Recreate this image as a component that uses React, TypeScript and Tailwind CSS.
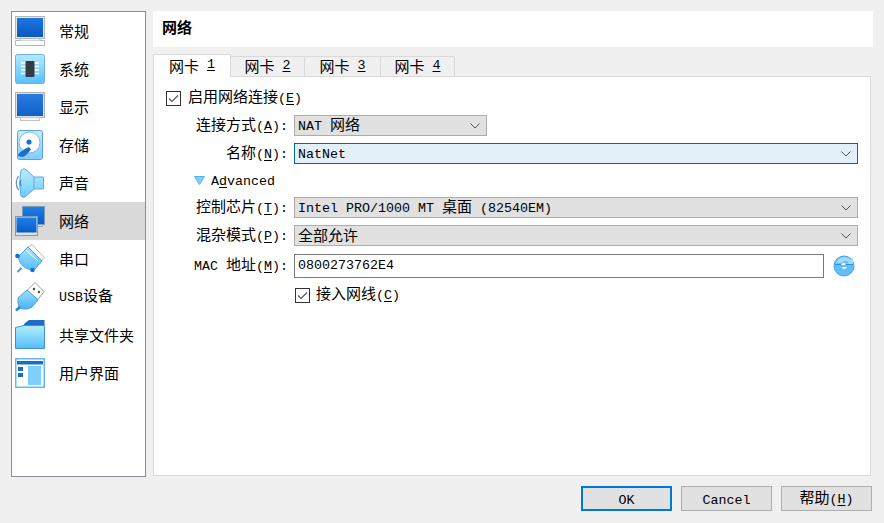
import React from "react";

const L = ({ children, u }: { children: React.ReactNode; u?: boolean }) => (
  <span className={`font-['Liberation_Mono'] text-[13.33px] whitespace-pre ${u ? "underline underline-offset-2" : ""}`}>{children}</span>
);

const Hot = ({ c }: { c: string }) => (
  <>
    <L>(</L>
    <L u>{c}</L>
    <L>)</L>
  </>
);

const Chevron = () => (
  <svg width="10" height="6" viewBox="0 0 10 6" fill="none" className="shrink-0">
    <path d="M0.500 0.500L5 5l4.500-4.500" stroke="#555" strokeWidth="1" />
  </svg>
);

const Check = () => (
  <svg width="15" height="15" viewBox="0 0 15 15" fill="none" className="shrink-0">
    <rect x="0.500" y="0.500" width="14" height="14" fill="#fff" stroke="#333" />
    <path d="M3 7.500l3 3L12 4.500" stroke="#555" strokeWidth="1.100" />
  </svg>
);

const Combo = ({ children, className, active }: { children: React.ReactNode; className?: string; active?: boolean }) => (
  <div
    className={`h-[21px] flex items-center justify-between pl-[3px] pr-[6px] border ${
      active ? "border-[#0067c0] bg-[#e3f0fa]" : "border-[#adadad] bg-[#e1e1e1]"
    } ${className ?? ""}`}
  >
    <span className="whitespace-pre leading-none pb-[2px]">{children}</span>
    <Chevron />
  </div>
);

const Row = ({ label, children, className }: { label: React.ReactNode; children: React.ReactNode; className?: string }) => (
  <div className={`flex items-center ${className ?? ""}`}>
    <div className="w-[140px] text-right whitespace-pre pr-[6px] pb-[2px] leading-none shrink-0">{label}</div>
    {children}
  </div>
);

const grad = (id: string, a: string, b: string) => (
  <linearGradient id={id} x1="0" y1="0" x2="0" y2="1">
    <stop offset="0" stopColor={a} />
    <stop offset="1" stopColor={b} />
  </linearGradient>
);

const icons: Record<string, React.ReactNode> = {
  general: (
    <>
      <defs>{grad("g1", "#1a78e0", "#0a58c0")}</defs>
      <rect x="0.500" y="0.500" width="29" height="22" fill="#e8e8e8" stroke="#b5b5b5" />
      <rect x="2" y="2" width="26" height="19" fill="url(#g1)" />
      <path d="M0.500 24.500h29v5H0.500z" fill="#fff" stroke="#b5b5b5" />
      <path d="M5 24.500v-2h20v2" fill="#f4f4f4" stroke="#b5b5b5" />
    </>
  ),
  system: (
    <>
      <defs>{grad("g2", "#b4ecff", "#55c0fb")}</defs>
      <rect x="0.500" y="0.500" width="29" height="29" rx="2" fill="url(#g2)" stroke="#6fb0e8" />
      <path d="M6 9h18M6 12.500h18M6 16h18M6 19.500h18" stroke="#fff" strokeWidth="1.400" />
      <rect x="10.500" y="7" width="9" height="16" rx="1" fill="#333b47" />
    </>
  ),
  display: (
    <>
      <defs>{grad("g3", "#2a7ce0", "#1060c8")}</defs>
      <rect x="0.500" y="0.500" width="29" height="25" fill="#e0e0e0" stroke="#b0b0b0" />
      <rect x="2" y="2" width="26" height="22" fill="url(#g3)" />
      <rect x="5.500" y="25.500" width="19" height="3" fill="#f7f7f7" stroke="#c4c4c4" />
    </>
  ),
  storage: (
    <>
      <defs>{grad("g4", "#c5eeff", "#7dcdfb")}</defs>
      <rect x="2.500" y="0.500" width="25" height="29" rx="2" fill="url(#g4)" stroke="#5a9fe0" />
      <circle cx="14.500" cy="12.500" r="10.500" fill="#fff" stroke="#7dbcec" />
      <circle cx="14" cy="12" r="2.600" fill="#1b6fd0" />
      <path d="M3 26c0-3 6-7 11-9l2 2.500c-2.500 3-5 6.500-8 7.500z" fill="#1b6fd0" />
    </>
  ),
  audio: (
    <>
      <defs>{grad("g5", "#bdeeff", "#6ccbfb")}</defs>
      <path d="M6 2.500Q8 0 10 1l9 8h9.500v12H19l-9 8q-2 1-4-1Q3 15 6 2.500z" fill="url(#g5)" stroke="#5fa5e6" />
      <path d="M19 9v12" stroke="#5fa5e6" strokeWidth="1" />
      <path d="M3.500 8Q-1 15 3.500 22" fill="none" stroke="#4a93d8" strokeWidth="1.200" />
      <path d="M6 12q-1.500 3 0 6" fill="none" stroke="#2c7fd8" strokeWidth="1" />
    </>
  ),
  network: (
    <>
      <defs>{grad("g6", "#1f80e8", "#0a5ac4")}</defs>
      <rect x="7.500" y="0.500" width="22" height="18" fill="url(#g6)" stroke="#7f9ab5" />
      <rect x="23" y="18.500" width="4" height="2" fill="#eee" stroke="#7f9ab5" />
      <rect x="0.500" y="10.500" width="22" height="19" fill="#dbe4ee" stroke="#7f9ab5" />
      <rect x="1.500" y="11.500" width="20" height="15" fill="url(#g6)" />
    </>
  ),
  serial: (
    <>
      <defs>{grad("g7", "#a5e6ff", "#58bef9")}</defs>
      <path d="M17 0.500L29.500 14l-3 3L13 3z" fill="#fff" stroke="#b8b8b8" />
      <path d="M13 3l14 14-7 8c-4 1-9 0-12-3-3-3-5-7-4-10z" fill="url(#g7)" stroke="#4c9ce6" />
      <path d="M11 6l12 11" stroke="#fff" strokeWidth="1" />
      <circle cx="2.500" cy="12" r="2.300" fill="#1b6fd0" />
      <circle cx="17.500" cy="26" r="2.300" fill="#1b6fd0" />
      <path d="M6.500 24l-4 4" stroke="#4c9ce6" strokeWidth="2" />
    </>
  ),
  usb: (
    <>
      <defs>{grad("g8", "#9fe2ff", "#49b2f6")}</defs>
      <path d="M20 0.500l9 9-6 8-11-9z" fill="#fff" stroke="#9a9a9a" />
      <rect x="18" y="6" width="2" height="2" fill="#333" transform="rotate(45 19 7)" />
      <rect x="23" y="9" width="2" height="2" fill="#333" transform="rotate(45 24 10)" />
      <path d="M12 8l11 10-6 7c-3 2-8 3-12 1-2-1-2-5-2-10z" fill="url(#g8)" stroke="#4c9ce6" />
      <path d="M5 25l-4 3.500" stroke="#2c7fd8" strokeWidth="2.500" />
    </>
  ),
  folder: (
    <>
      <defs>{grad("g9", "#b2edff", "#57bdf8")}</defs>
      <path d="M10 3l4-3h15.500v6H8z" fill="#1b6cc8" />
      <path d="M0.500 7.500L9 5.500h20.500v23H.5z" fill="url(#g9)" stroke="#3f8fdc" />
    </>
  ),
  ui: (
    <>
      <rect x="0.750" y="0.750" width="28.500" height="28.500" fill="#fff" stroke="#62b8f2" strokeWidth="1.500" />
      <rect x="2" y="3" width="26" height="3.500" fill="#1b6cc8" />
      <rect x="3" y="9" width="5" height="4" fill="#1b6cc8" />
      <rect x="3" y="15" width="5" height="4" fill="#1b6cc8" />
      <rect x="13" y="8" width="13" height="19" fill="#7dd0fb" />
    </>
  ),
};

const Icon = ({ name }: { name: string }) => (
  <svg width="30" height="30" viewBox="0 0 30 30" className="shrink-0">
    {icons[name]}
  </svg>
);

const nav: [string, React.ReactNode, boolean?][] = [
  ["general", "常规"],
  ["system", "系统"],
  ["display", "显示"],
  ["storage", "存储"],
  ["audio", "声音"],
  ["network", "网络", true],
  ["serial", "串口"],
  ["usb", <><L>USB</L>设备</>],
  ["folder", "共享文件夹"],
  ["ui", "用户界面"],
];

const tabs: [string, string][] = [
  ["1", "w-[78px] h-[23px] bg-white border-b-0"],
  ["2", "w-[74px] h-[21px] bg-[#f0f0f0] border-l-0"],
  ["3", "w-[76px] h-[21px] bg-[#f0f0f0] border-l-0"],
  ["4", "w-[74px] h-[21px] bg-[#f0f0f0] border-l-0"],
];

export default function App() {
  return (
    <div className="w-[884px] h-[523px] bg-[#f0f0f0] text-[15px] text-black font-['Noto_Sans_CJK_SC',sans-serif] flex flex-col px-[11px] pt-[11px] overflow-hidden">
      <div className="flex h-[466px] shrink-0">
        <aside className="w-[135px] shrink-0 bg-white border border-[#8b9097] mr-[7px]">
          {nav.map(([n, t, sel], i) => (
            <div key={i} className={`h-[38px] flex items-center pl-[3px] ${sel ? "bg-[#d9d9d9]" : ""}`}>
              <Icon name={n} />
              <span className="ml-[14px] pb-[2px] leading-none whitespace-pre">{t}</span>
            </div>
          ))}
        </aside>
        <main className="flex-1 flex flex-col min-w-0">
          <div className="h-[36px] bg-white shrink-0 flex items-center pl-[9px] pb-[3px] font-bold text-[15px]">网络</div>
          <div className="flex items-end h-[23px] mt-[7px] shrink-0 relative z-10">
            {tabs.map(([n, cls]) => (
              <div
                key={n}
                className={`flex items-center justify-center whitespace-pre leading-none pb-[2px] border border-[#d9d9d9] ${cls}`}
              >
                网卡<L> </L><L u>{n}</L>
              </div>
            ))}
          </div>
          <div className="w-[718px] flex-1 -mt-px mb-px bg-white border border-[#d9d9d9] pl-[12px] pt-[13px]">
            <div className="flex items-center h-[16px]">
              <Check />
              <span className="ml-[7px] pb-[2px] leading-none whitespace-pre">
                启用网络连接<Hot c="E" />
              </span>
            </div>
            <div className="ml-[-12px] flex flex-col">
              <Row className="mt-[9px]" label={<>连接方式<Hot c="A" /><L>:</L></>}>
                <Combo className="w-[193px]"><L>NAT </L>网络</Combo>
              </Row>
              <Row className="mt-[7px]" label={<>名称<Hot c="N" /><L>:</L></>}>
                <Combo className="w-[564px]" active><L>NatNet</L></Combo>
              </Row>
              <div className="h-[33px] flex items-center pl-[40px]">
                <svg width="11" height="9" viewBox="0 0 11 9" className="shrink-0">
                  <path d="M0.500 0.500h10L5.500 8.500z" fill="#7fd0fa" stroke="#5cb0ea" />
                </svg>
                <span className="ml-[6px] pb-[2px] leading-none"><L>A</L><L u>d</L><L>vanced</L></span>
              </div>
              <Row label={<>控制芯片<Hot c="T" /><L>:</L></>}>
                <Combo className="w-[564px]"><L>Intel PRO/1000 MT </L>桌面<L> (82540EM)</L></Combo>
              </Row>
              <Row className="mt-[7px]" label={<>混杂模式<Hot c="P" /><L>:</L></>}>
                <Combo className="w-[564px]">全部允许</Combo>
              </Row>
              <Row className="mt-[8px]" label={<><L>MAC </L>地址<Hot c="M" /><L>:</L></>}>
                <div className="w-[530px] h-[24px] border border-[#7a7a7a] flex items-center pl-[3px] leading-none"><L>0800273762E4</L></div>
                <svg width="22" height="22" viewBox="0 0 22 22" className="ml-[9px] shrink-0">
                  <circle cx="11" cy="11" r="10" fill="#62bdf9" stroke="#45a3ee" />
                  <path d="M3 8a9 9 0 0 1 15-3l2-2v7h-7l3-3a6 6 0 0 0-8 1z" fill="#a5dcfc" />
                  <path d="M2 9.500h18" stroke="#2f8fe0" strokeWidth="1" />
                  <path d="M8 10a3 3 0 0 1 5-1l-1 1zM9 12h5a3 3 0 0 1-5 1z" fill="#f2faff" />
                </svg>
              </Row>
              <div className="flex items-center h-[16px] mt-[9px] pl-[141px]">
                <Check />
                <span className="ml-[6px] pb-[2px] leading-none whitespace-pre">接入网线<Hot c="C" /></span>
              </div>
            </div>
          </div>
        </main>
      </div>
      <div className="flex justify-end gap-[9px] mt-[9px] pr-[1px]">
        <button className="w-[91px] h-[25px] border-2 border-[#0078d7] bg-[#e1e1e1] leading-none"><L>OK</L></button>
        <button className="w-[91px] h-[25px] border border-[#adadad] bg-[#e1e1e1] leading-none"><L>Cancel</L></button>
        <button className="w-[91px] h-[25px] border border-[#adadad] bg-[#e1e1e1] leading-none pb-[2px]">帮助<Hot c="H" /></button>
      </div>
    </div>
  );
}
